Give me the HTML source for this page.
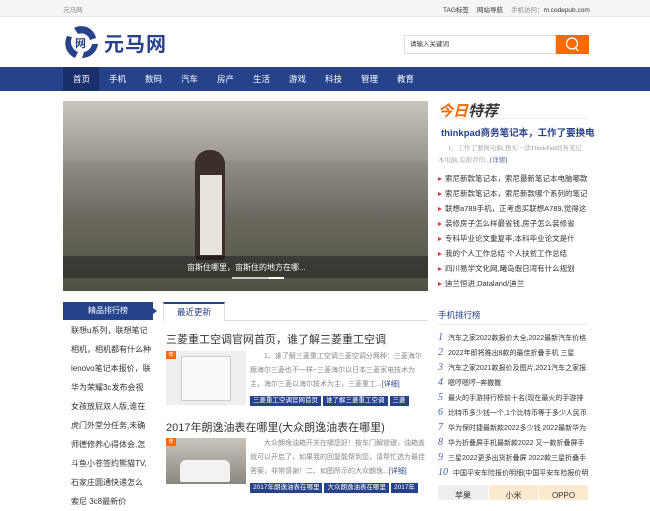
<!DOCTYPE html>
<html><head><meta charset="utf-8"><style>
*{margin:0;padding:0;box-sizing:border-box}
body{width:650px;height:500px;overflow:hidden;background:#fff;font-family:"Liberation Sans","Noto Sans CJK SC",sans-serif;color:#333;font-size:8px;position:relative}
.a{position:absolute}
.top{left:0;top:0;width:650px;height:17px;background:#f5f5f5;border-bottom:1px solid #e8e8e8}
.nav{left:0;top:67px;width:650px;height:24px;background:#26428b}
.nav span{position:absolute;top:0;height:24px;line-height:24px;color:#fff;font-size:8.5px}
.rlist div{height:15px;line-height:15px;font-size:7.5px;color:#333;white-space:nowrap;overflow:hidden;padding-left:7px;position:relative}
.rlist div:before{content:"";position:absolute;left:0;top:6px;border-left:4px solid #e33;border-top:2.5px solid transparent;border-bottom:2.5px solid transparent}
.llist div{height:19px;line-height:19px;font-size:8px;padding-left:8px;white-space:nowrap;overflow:hidden}
.num div{height:15px;line-height:15px;font-size:7px;white-space:nowrap;overflow:hidden}
.num i{color:#4a5fa8;font-family:"Liberation Serif",serif;font-size:10px;margin-right:4px;display:inline-block;width:6px}
.tag{display:inline-block;background:#26428b;color:#fff;font-size:6.5px;padding:0 3px;height:10px;line-height:10px;margin-right:2px}
.sum{font-size:7px;color:#888;line-height:14px;text-indent:14px}
.sum b{color:#26428b;font-weight:normal}
</style></head><body>
<div class="a top"></div>
<div class="a" style="left:63px;top:4px;font-size:6.5px;color:#888">元马网</div>
<div class="a" style="left:443px;top:4px;font-size:6.5px;color:#333">TAG标签</div>
<div class="a" style="left:477px;top:4px;font-size:6.5px;color:#333">网站导航</div>
<div class="a" style="left:511px;top:4px;font-size:6.5px;color:#888">手机访问：<span style="color:#333">m.codepub.com</span></div>
<svg class="a" style="left:64px;top:24px" width="36" height="36" viewBox="0 0 36 36"><path d="M10 4 A15 15 0 0 1 32 14 L26 16 A9 9 0 0 0 14 10 Z" fill="#26428b"/><path d="M3 12 L8 13 A11 11 0 0 0 14 28 L11 34 A16 16 0 0 1 3 12Z" fill="#26428b"/><path d="M18 34 L20 28 A10 10 0 0 0 28 20 L34 20 A16 16 0 0 1 18 34Z" fill="#26428b"/><text x="11" y="23" font-size="11" font-weight="bold" fill="#26428b" font-family="Noto Sans CJK SC">网</text></svg>
<div class="a" style="left:104px;top:28px;font-size:20px;font-weight:bold;color:#26428b;letter-spacing:1px">元马网</div>
<div class="a" style="left:404px;top:35px;width:152px;height:19px;border:1px solid #ddd;font-size:6.5px;line-height:17px;padding-left:5px;color:#333">请输入关键词</div>
<div class="a" style="left:556px;top:35px;width:33px;height:19px;background:#ff6a00"></div>
<svg class="a" style="left:563px;top:36px" width="18" height="17"><circle cx="9" cy="7.5" r="5.5" fill="none" stroke="#fff" stroke-width="1.3"/><path d="M12.5 11.5 L15 15" stroke="#fff" stroke-width="1.3"/></svg>
<div class="a nav"></div>
<div class="a" style="left:63px;top:67px;width:36px;height:24px;background:#1b2f6b"></div>
<div class="a" style="left:0;top:67px;width:650px;height:24px">
<div class="nav" style="position:relative;background:none;top:0">
<span style="left:73px">首页</span><span style="left:109px">手机</span><span style="left:145px">数码</span><span style="left:181px">汽车</span><span style="left:217px">房产</span><span style="left:253px">生活</span><span style="left:289px">游戏</span><span style="left:325px">科技</span><span style="left:361px">管理</span><span style="left:397px">教育</span></div></div>
<div class="a" style="left:63px;top:101px;width:365px;height:190px;background:linear-gradient(180deg,#b9b4ad 0%,#8e8a83 35%,#6c6a60 60%,#515045 100%)"></div>
<div class="a" style="left:63px;top:101px;width:365px;height:60px;background:linear-gradient(180deg,#c8c4be,#9a958e)"></div>
<div class="a" style="left:195px;top:150px;width:30px;height:110px;background:#3a2f2a;border-radius:14px 14px 4px 4px"></div>
<div class="a" style="left:200px;top:175px;width:22px;height:80px;background:#e8e4dc"></div>
<div class="a" style="left:63px;top:256px;width:365px;height:22px;background:rgba(0,0,0,.35)"></div>
<div class="a" style="left:187px;top:262px;color:#fff;font-size:8px">宙斯住哪里，宙斯住的地方在哪...</div>
<div class="a" style="left:232px;top:277px;width:52px;height:2px;background:#ccc"></div>
<div class="a" style="left:269px;top:277px;width:15px;height:2px;background:#fff"></div>
<div class="a" style="left:438px;top:100px;font-size:15px;font-weight:bold;font-style:italic;color:#ff6a00">今日<span style="color:#333">特荐</span></div>
<div class="a" style="left:438px;top:118px;width:150px;height:1px;background:#eee"></div>
<div class="a" style="left:441px;top:125px;font-size:9.5px;font-weight:bold;color:#26428b;white-space:nowrap">thinkpad商务笔记本，工作了要换电</div>
<div class="a" style="left:438px;top:143px;width:150px;font-size:6.5px;color:#999;line-height:12px;font-family:'Liberation Serif','Noto Serif CJK SC',serif">&nbsp;&nbsp;&nbsp;&nbsp;&nbsp;&nbsp;1、工作了要换电脑,想买一款ThinkPad商务笔记本电脑,有推荐的...<span style="color:#26428b">[详情]</span></div>
<div class="a rlist" style="left:438px;top:171px;width:152px">
<div>索尼新款笔记本，索尼最新笔记本电脑哪款</div><div>索尼新款笔记本，索尼新款哪个系列的笔记</div><div>联想a789手机，正考虑买联想A789,觉得这</div><div>装修房子怎么样最省钱,房子怎么装修省</div><div>专科毕业论文重复率,本科毕业论文是什</div><div>我的个人工作总结 个人扶贫工作总结</div><div>四川易学文化网,曦岛假日湾有什么规划</div><div>迪兰恒进,Dataland/迪兰</div></div>
<div class="a" style="left:63px;top:302px;width:90px;height:18px;background:#26428b;color:#fff;font-size:8px;line-height:18px;text-align:center">精品排行榜</div>
<div class="a" style="left:153px;top:308px;border-left:4px solid #26428b;border-top:3px solid transparent;border-bottom:3px solid transparent"></div>
<div class="a llist" style="left:63px;top:321px;width:90px">
<div>联想u系列，联想笔记</div><div>相机，相机都有什么种</div><div>lenovo笔记本报价，联</div><div>华为荣耀3c发布会视</div><div>女孩放屁双人版,谁在</div><div>虎门外堂分任务,未确</div><div>师德修养心得体会,怎</div><div>斗鱼小苍签约熊猫TV,</div><div>石家庄圆通快递怎么</div><div>索尼 3c8最新价</div></div>
<div class="a" style="left:163px;top:320px;width:265px;height:1px;background:#ddd"></div>
<div class="a" style="left:163px;top:302px;width:62px;height:19px;background:#fff;border:1px solid #ddd;border-top:2px solid #26428b;border-bottom:none;color:#26428b;font-size:8.5px;text-align:center;line-height:17px">最近更新</div>
<div class="a" style="left:166px;top:331px;font-size:11px;color:#333;white-space:nowrap">三菱重工空调官网首页，谁了解三菱重工空调</div>
<div class="a" style="left:166px;top:351px;width:80px;height:54px;background:#eee"></div>
<div class="a" style="left:181px;top:356px;width:50px;height:45px;background:#fafafa;border:1px solid #ccc"></div>
<div class="a" style="left:166px;top:351px;width:10px;height:8px;background:#ff6a00;color:#fff;font-size:5px;text-align:center;line-height:8px">荐</div>
<div class="a sum" style="left:250px;top:350px;width:176px">1、谁了解三菱重工空调三菱空调分两种：三菱海尔跟海尔三菱也不一样~三菱海尔以日本三菱家电技术为主，海尔三菱以海尔技术为主，三菱重工...<b>[详细]</b></div>
<div class="a" style="left:250px;top:395px;white-space:nowrap"><span class="tag">三菱重工空调官网首页</span><span class="tag">谁了解三菱重工空调</span><span class="tag">三菱</span></div>
<div class="a" style="left:166px;top:419px;font-size:11px;color:#333;white-space:nowrap">2017年朗逸油表在哪里(大众朗逸油表在哪里)</div>
<div class="a" style="left:166px;top:438px;width:80px;height:46px;background:linear-gradient(180deg,#c9c5bd,#8a8780)"></div>
<div class="a" style="left:180px;top:460px;width:50px;height:22px;background:#f2f2f2;border-radius:6px 6px 2px 2px"></div>
<div class="a" style="left:166px;top:438px;width:10px;height:8px;background:#ff6a00;color:#fff;font-size:5px;text-align:center;line-height:8px">荐</div>
<div class="a sum" style="left:250px;top:437px;width:176px">大众朗逸油箱开关在哪您好！按车门解锁键，油箱盖就可以开启了，如果我的回复能帮到您，请帮忙选为最佳答案，非常感谢！二、如图所示的大众朗逸...<b>[详细]</b></div>
<div class="a" style="left:250px;top:482px;white-space:nowrap"><span class="tag">2017年朗逸油表在哪里</span><span class="tag">大众朗逸油表在哪里</span><span class="tag">2017年</span></div>
<div class="a" style="left:438px;top:309px;font-size:8.5px;color:#26428b">手机排行榜</div>
<div class="a" style="left:438px;top:324px;width:150px;height:1px;background:#eee"></div>
<div class="a num" style="left:438px;top:330px;width:152px">
<div><i>1</i>汽车之家2022款报价大全,2022最新汽车价格</div><div><i>2</i>2022年即将推出8款的最佳折叠手机 三星</div><div><i>3</i>汽车之家2021款报价及图片,2021汽车之家报</div><div><i>4</i>嗯哼嗯哼~奔撒撒</div><div><i>5</i>最火的手游排行榜前十名(现在最火的手游排</div><div><i>6</i>比特币多少钱一个,1个比特币等于多少人民币</div><div><i>7</i>华为保时捷最新款2022多少钱 2022最新华为</div><div><i>8</i>华为折叠屏手机最新款2022 又一款折叠屏手</div><div><i>9</i>三星2022更多出货折叠屏 2022款三星折叠手</div><div><i style="width:11px">10</i>中国平安车险报价明细(中国平安车险报价明</div></div>
<div class="a" style="left:438px;top:485px;width:50px;height:15px;background:#eee;font-size:8px;text-align:center;line-height:22px">苹果</div>
<div class="a" style="left:489px;top:485px;width:49px;height:15px;background:#fde9d0;font-size:8px;text-align:center;line-height:22px">小米</div>
<div class="a" style="left:539px;top:485px;width:49px;height:15px;background:#fde9d0;font-size:8px;text-align:center;line-height:22px">OPPO</div>
</body></html>
